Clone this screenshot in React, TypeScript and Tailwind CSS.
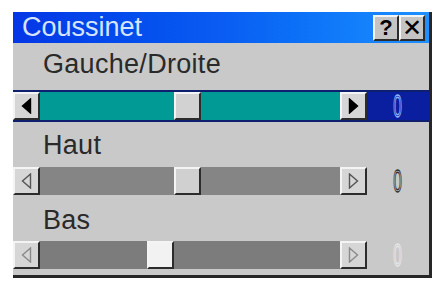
import React from 'react';

const font = { fontFamily: '"Liberation Sans", Arial, sans-serif' };

function Arrow({ dir, mode }: { dir: 'l' | 'r'; mode: 'solid' | 'dim' | 'faint' }) {
  const pts = dir === 'l' ? '9,1 1,8 9,15' : '1,1 9,8 1,15';
  const stroke = mode === 'solid' ? '#000' : mode === 'dim' ? '#555' : '#8a8a8a';
  return (
    <svg width="11" height="16" viewBox="0 0 10 16">
      <polygon points={pts} fill={mode === 'solid' ? '#000' : 'none'} stroke={stroke} strokeWidth="1.4" />
    </svg>
  );
}

function Bevel({ className = '', children }: { className?: string; children?: React.ReactNode }) {
  return (
    <div className={`flex items-center justify-center border-2 border-t-[#f4f4f4] border-l-[#f4f4f4] border-b-[#2c2c2c] border-r-[#2c2c2c] ${className}`}>
      {children}
    </div>
  );
}

export default function App() {
  const label = 'pl-[30px] text-[27px] leading-none tracking-[0.3px] text-[#2a2a2a]';
  return (
    <div className="h-[281px] w-[434px] overflow-hidden bg-white pl-[13px] pt-[12px]" style={font}>
      <div className="flex h-[266px] w-[419px] flex-col border-r-[3px] border-b-[3px] border-[#262626] bg-[#c9c9c9]">
        <div className="flex h-[31px] items-center bg-gradient-to-r from-[#0536e6] via-[#0a5cf2] to-[#1e90ff] pl-[9px] pr-[4px]">
          <div className="flex-1 text-[27px] leading-none text-[#d6e4ff]">Coussinet</div>
          <Bevel className="h-[26px] w-[26px] bg-[#c4c4c4] text-[22px] font-bold leading-none text-black">?</Bevel>
          <Bevel className="h-[26px] w-[26px] bg-[#c4c4c4] text-[24px] leading-none text-black">✕</Bevel>
        </div>

        <div className="flex h-[47px] items-center pb-[4px]">
          <div className={label}>Gauche/Droite</div>
        </div>
        <SliderRow thumbAt={134} track="bg-[#029a94]" thumbBg="bg-[#d2d2d2]" mode="solid" selected digit="[-webkit-text-stroke:1.3px_#8fb4ff]" />

        <div className="flex h-[45px] items-center pt-[2px]">
          <div className={label}>Haut</div>
        </div>
        <SliderRow thumbAt={134} track="bg-[#858585]" thumbBg="bg-[#d0d0d0]" mode="dim" digit="[-webkit-text-stroke:1.3px_#333]" />

        <div className="flex h-[46px] items-center pt-[4px]">
          <div className={label}>Bas</div>
        </div>
        <SliderRow thumbAt={107} track="bg-[#7c7c7c]" thumbBg="bg-[#f2f2f2]" mode="faint" digit="[-webkit-text-stroke:1.3px_#e6e6e6]" />
      </div>
    </div>
  );
}

function SliderRow({
  track,
  thumbAt,
  thumbBg,
  mode,
  selected,
  digit,
}: {
  track: string;
  thumbAt: number;
  thumbBg: string;
  mode: 'solid' | 'dim' | 'faint';
  selected?: boolean;
  digit: string;
}) {
  return (
    <div className={`flex h-[28px] ${selected ? 'box-content border-y-2 border-[#0d1f6e]' : ''}`}>
      <Bevel className="w-[27px] bg-[#d6d6d6]">
        <Arrow dir="l" mode={mode} />
      </Bevel>
      <div className={`relative w-[300px] ${track}`}>
        <div className="absolute top-0 h-full" style={{ left: thumbAt }}>
          <Bevel className={`h-full w-[27px] ${thumbBg}`} />
        </div>
      </div>
      <Bevel className="w-[27px] bg-[#d6d6d6]">
        <Arrow dir="r" mode={mode} />
      </Bevel>
      <div className={`flex flex-1 items-center justify-center ${selected ? 'bg-[#0a1fa0]' : ''}`}>
        <span className={`inline-block scale-x-[0.5] text-[31px] leading-none text-transparent ${digit}`}>0</span>
      </div>
    </div>
  );
}
